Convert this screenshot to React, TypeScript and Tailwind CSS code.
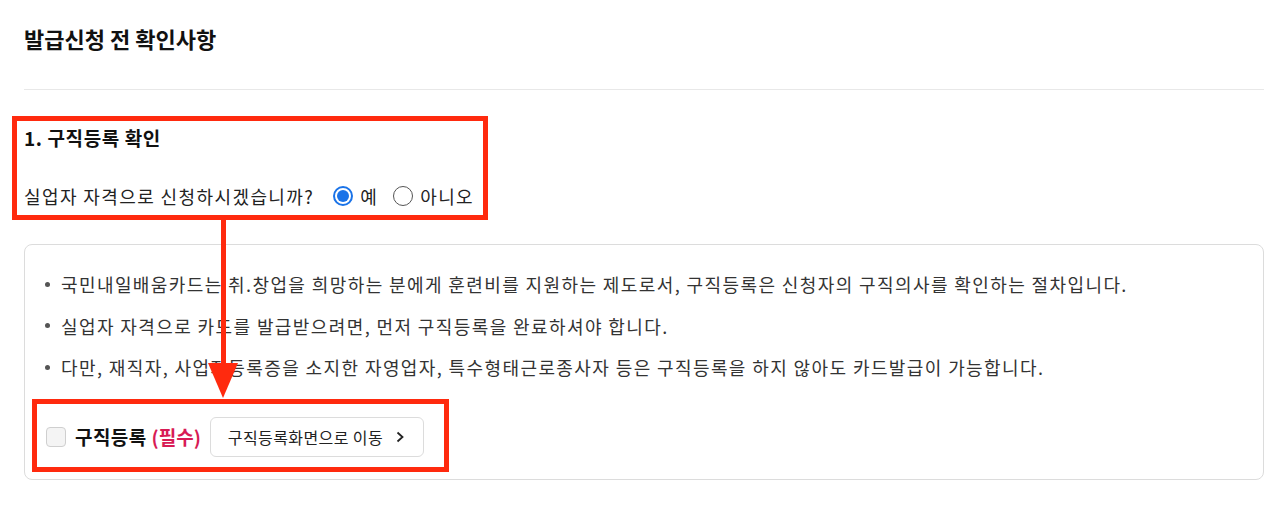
import React from 'react';

const notes = [
  '국민내일배움카드는 취.창업을 희망하는 분에게 훈련비를 지원하는 제도로서, 구직등록은 신청자의 구직의사를 확인하는 절차입니다.',
  '실업자 자격으로 카드를 발급받으려면, 먼저 구직등록을 완료하셔야 합니다.',
  '다만, 재직자, 사업자등록증을 소지한 자영업자, 특수형태근로종사자 등은 구직등록을 하지 않아도 카드발급이 가능합니다.',
];

function Radio({ checked, label }: { checked?: boolean; label: string }) {
  return (
    <label className="flex items-center gap-[7px]">
      <span
        className={
          checked
            ? 'flex h-[20px] w-[20px] items-center justify-center rounded-full border-2 border-[#1a73e8] bg-white'
            : 'h-[20px] w-[20px] rounded-full border border-[#555] bg-white'
        }
      >
        {checked && <span className="h-[12px] w-[12px] rounded-full bg-[#1a73e8]" />}
      </span>
      <span>{label}</span>
    </label>
  );
}

export default function App() {
  return (
    <div
      className="relative h-[506px] w-[1280px] overflow-hidden bg-white pl-6 pr-4 text-[#222]"
      style={{ fontFamily: '"Noto Sans CJK KR", "Noto Sans", sans-serif' }}
    >
      <h2 className="pt-[22px] text-[22px] font-bold leading-[32px] text-[#111]">발급신청 전 확인사항</h2>
      <div className="mt-[35px] h-px w-full bg-[#e8e8e8]" />

      <section className="pt-[34px]">
        <h3 className="text-[19px] font-bold leading-[28px] tracking-[0.6px] text-[#111]">1. 구직등록 확인</h3>
        <div className="mt-[30px] flex items-center text-[18px] leading-[28px] tracking-[1.4px] text-[#222]">
          <span>실업자 자격으로 신청하시겠습니까?</span>
          <div className="ml-[19px] flex items-center gap-[15px]">
            <Radio checked label="예" />
            <Radio label="아니오" />
          </div>
        </div>
      </section>

      <div className="mt-[34px] h-[236px] rounded-[8px] border border-[#dcdcdc] px-[20px] pt-[25px]">
        <ul className="flex flex-col gap-[13.5px] text-[18px] leading-[28px] tracking-[1.4px] text-[#333]">
          {notes.map((n) => (
            <li key={n} className="flex items-center">
              <span className="mr-[11px] h-[5px] w-[5px] shrink-0 rounded-full bg-[#555]" />
              <span>{n}</span>
            </li>
          ))}
        </ul>
        <div className="mt-[36px] flex items-center">
          <span className="ml-[1px] h-[20px] w-[20px] rounded-[4px] border border-[#cfcfcf] bg-[#f4f4f4]" />
          <span className="ml-[9px] text-[19px] font-bold tracking-[0.4px] text-[#111]">구직등록</span>
          <span className="ml-[5px] text-[19px] font-bold text-[#d81b55]">(필수)</span>
          <button className="ml-[9px] flex h-[40px] items-center gap-[12px] rounded-[6px] border border-[#dcdcdc] bg-white pl-[17px] pr-[18px] text-[16px] tracking-[0.4px] text-[#222]">
            구직등록화면으로 이동
            <svg width="10" height="12" viewBox="0 0 10 12" fill="none" stroke="#222" strokeWidth="1.8">
              <path d="M2.5 1.5 L7.5 6 L2.5 10.5" />
            </svg>
          </button>
        </div>
      </div>

      {/* annotation overlays */}
      <div className="pointer-events-none absolute left-[12px] top-[116px] h-[104px] w-[476px] border-[5px] border-[#ff2a0e]" />
      <div className="pointer-events-none absolute left-[221px] top-[218px] h-[148px] w-[5px] bg-[#ff2a0e]" />
      <svg className="pointer-events-none absolute left-[208px] top-[363px]" width="30" height="35" viewBox="0 0 30 35">
        <polygon points="0,0 30,0 15,35" fill="#ff2a0e" />
      </svg>
      <div className="pointer-events-none absolute left-[32px] top-[399px] h-[73px] w-[417px] border-[5px] border-[#ff2a0e]" />
    </div>
  );
}
